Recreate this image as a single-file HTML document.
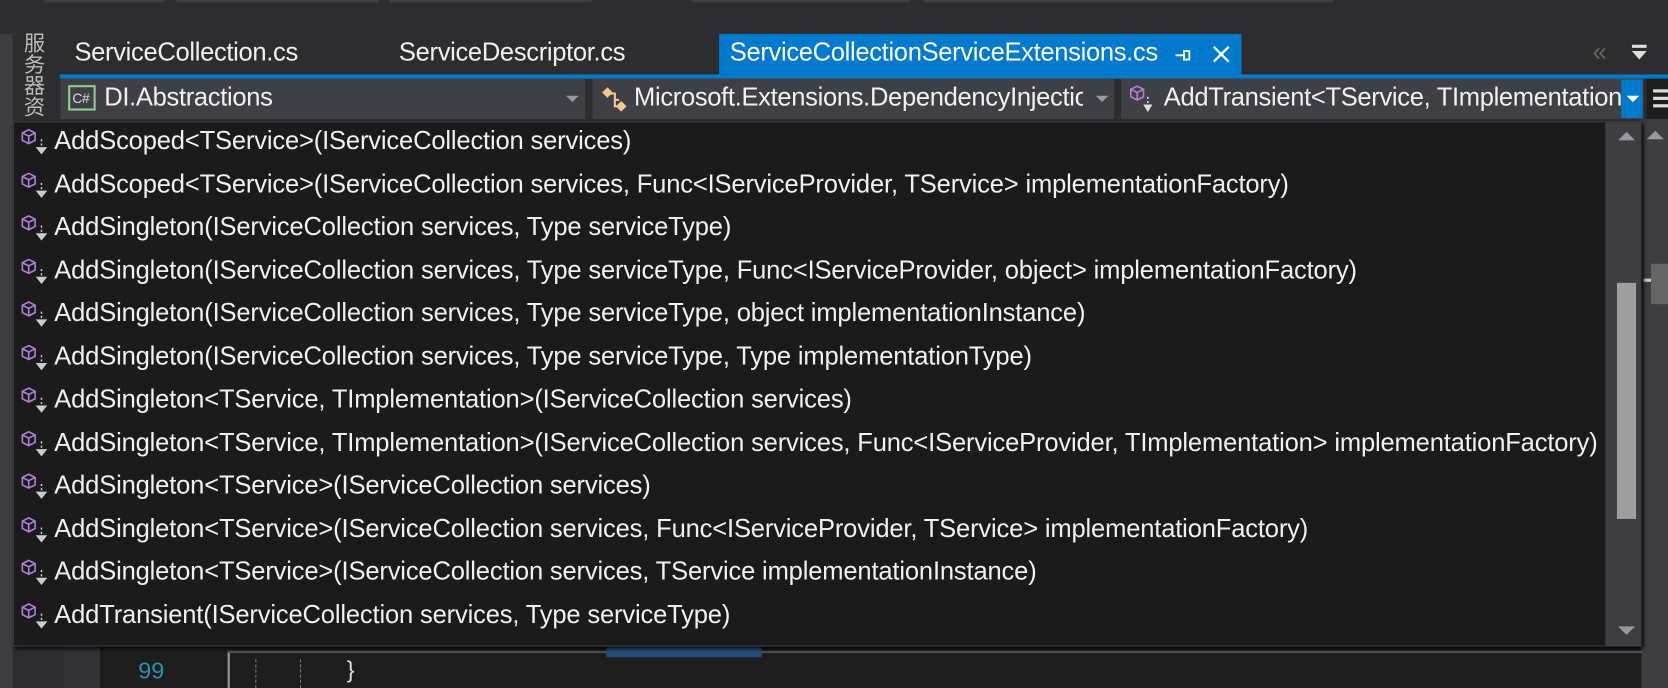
<!DOCTYPE html>
<html><head><meta charset="utf-8"><style>
*{margin:0;padding:0;box-sizing:border-box}
body{width:1668px;height:688px;background:#2d2d30;overflow:hidden;font-family:"Liberation Sans","Noto Sans CJK SC",sans-serif;color:#f1f1f1}
#w{position:absolute;left:0;top:0;width:1568px;height:647px;transform:scale(1.06378,1.0634);transform-origin:0 0;overflow:hidden;background:#2d2d30}
.a{position:absolute}
.tab{position:absolute;top:32px;height:38px;font-size:24px;line-height:36px;padding-left:10px;white-space:nowrap;letter-spacing:-0.3px}
.combo{position:absolute;top:74px;height:38px;background:#3f3f46;border:1px solid #434346;font-size:24px;line-height:34px;white-space:nowrap;overflow:hidden;letter-spacing:-0.3px}
.tri{position:absolute;width:0;height:0;border-left:6px solid transparent;border-right:6px solid transparent;border-top:6px solid #999}
.row{position:absolute;left:6px;height:40px;font-size:24px;line-height:40px;white-space:nowrap;color:#f1f1f1;letter-spacing:-0.15px}
.row svg{position:absolute;left:0;top:8px}
.row span{position:absolute;left:32px}
</style></head><body><div id="w">
<div class="a" style="left:42px;top:0;width:112px;height:2px;background:#3f3f46"></div>
<div class="a" style="left:166px;top:0;width:190px;height:2px;background:#3f3f46"></div>
<div class="a" style="left:366px;top:0;width:190px;height:2px;background:#3f3f46"></div>
<div class="a" style="left:650px;top:0;width:205px;height:2px;background:#3f3f46"></div>
<div class="a" style="left:868px;top:0;width:385px;height:2px;background:#3f3f46"></div>
<div class="a" style="left:0;top:32px;width:12px;height:615px;background:#3e3e42"></div>
<div class="a" style="left:19px;top:30px;font-size:20px;line-height:22px;width:22px;color:#bbb;writing-mode:vertical-rl">服务器资</div>
<div class="tab" style="left:60px">ServiceCollection.cs</div>
<div class="tab" style="left:365px">ServiceDescriptor.cs</div>
<div class="tab" style="left:676px;width:491px;background:#007acc;color:#fff">ServiceCollectionServiceExtensions.cs
<svg style="position:absolute;left:428px;top:13px" width="16" height="14"><path d="M1 7H9M9 2V12M9 3H14V11H9" stroke="#fff" stroke-width="1.8" fill="none"/></svg>
<svg style="position:absolute;left:464px;top:11px" width="16" height="16"><path d="M1 1L15 15M15 1L1 15" stroke="#fff" stroke-width="2.2"/></svg></div>
<div class="a" style="left:1497px;top:36px;font-size:24px;color:#666">«</div>
<svg class="a" style="left:1534px;top:42px" width="14" height="16"><rect x="0" y="0" width="14" height="3" fill="#ddd"/><path d="M0 6H14L7 14Z" fill="#ddd"/></svg>
<div class="a" style="left:56px;top:70px;width:1512px;height:4px;background:#007acc"></div>
<div class="combo" style="left:57px;width:493px"><svg style="position:absolute;left:6px;top:5px" width="26" height="24"><rect x="1" y="1" width="24" height="22" fill="none" stroke="#8fd18f" stroke-width="2"/><text x="4" y="17" font-size="13" fill="#ddd" font-family="Liberation Sans">C#</text></svg><span style="position:absolute;left:40px">DI.Abstractions</span><div class="tri" style="left:474px;top:15px"></div></div>
<div class="combo" style="left:557px;width:490px"><svg style="position:absolute;left:6px;top:6px" width="28" height="26"><path d="M2 6L7 1L12 6L7 11Z" fill="#f0c890"/><path d="M9 7H14V19H18M14 13H18" stroke="#f0c890" stroke-width="2" fill="none"/><path d="M15 19L20 14L25 19L20 24Z" fill="#f0c890"/></svg><span style="position:absolute;left:38px;width:422px;overflow:hidden">Microsoft.Extensions.DependencyInjection</span><div class="tri" style="left:472px;top:15px"></div></div>
<div class="combo" style="left:1054px;width:491px"><svg style="position:absolute;left:4px;top:4px" width="30" height="30"><path d="M4 5L10 2L16 5V12L10 15L4 12Z M4 5L10 8L16 5M10 8V15" fill="none" stroke="#b180d7" stroke-width="1.5"/><path d="M20 12V14M20 16V18M17 20H23L20 25Z" stroke="#ddd" fill="#ddd" stroke-width="1.5"/></svg><span style="position:absolute;left:39px;width:430px;overflow:hidden">AddTransient&lt;TService, TImplementation&gt;</span><div style="position:absolute;left:469px;top:-1px;width:22px;height:38px;background:#007acc"><div class="tri" style="left:5px;top:16px;border-top-color:#fff"></div></div></div>
<div class="a" style="left:1548px;top:74px;width:20px;height:38px;background:#1e1e1e"><div style="position:absolute;left:6px;top:10px;width:14px;height:3px;background:#ddd"></div><div style="position:absolute;left:6px;top:17px;width:14px;height:3px;background:#ddd"></div><div style="position:absolute;left:6px;top:24px;width:14px;height:3px;background:#ddd"></div></div>
<div class="a" style="left:1543px;top:112px;width:25px;height:535px;background:#3e3e42"></div>
<div class="a" style="left:1545px;top:262px;width:23px;height:3px;background:#ccc"></div>
<div class="a" style="left:1552px;top:248px;width:16px;height:38px;background:#666"></div>
<div class="a" style="left:1548px;top:123px;width:0;height:0;border-left:8px solid transparent;border-right:8px solid transparent;border-bottom:8px solid #999"></div>
<div class="a" style="left:12px;top:608px;width:48px;height:39px;background:#2d2d30"></div>
<div class="a" style="left:60px;top:608px;width:1483px;height:39px;background:#1e1e1e"></div>
<div class="a" style="left:60px;top:608px;width:34px;height:39px;background:#333337"></div>
<div class="a" style="left:130px;top:618px;font-size:22px;color:#2b91af">99</div>
<div class="a" style="left:214px;top:612px;width:2px;height:35px;background:#999"></div>
<div class="a" style="left:214px;top:612px;width:1330px;height:2px;background:#555"></div>
<div class="a" style="left:570px;top:608px;width:146px;height:10px;background:#264f78"></div>
<div class="a" style="left:240px;top:620px;width:1px;height:27px;border-left:1px dashed #777"></div>
<div class="a" style="left:282px;top:620px;width:1px;height:27px;border-left:1px dashed #777"></div>
<div class="a" style="left:326px;top:617px;font-size:22px;color:#ddd">}</div>
<div class="a" style="left:12px;top:114px;width:1531px;height:494px;background:#1b1b1c;border:1px solid #3f3f46;box-shadow:2px 2px 4px #000;overflow:hidden">
<div class="a" style="left:1496px;top:0;width:34px;height:492px;background:#3e3e42"></div>
<div class="a" style="left:1507px;top:151px;width:18px;height:222px;background:#9e9e9e"></div>
<div class="a" style="left:1508px;top:9px;width:0;height:0;border-left:8px solid transparent;border-right:8px solid transparent;border-bottom:8px solid #999"></div>
<div class="a" style="left:1508px;top:474px;width:0;height:0;border-left:8px solid transparent;border-right:8px solid transparent;border-top:8px solid #999"></div>
<div class="a" style="left:0;top:-2px;width:1495px;height:494px;overflow:hidden">
<div id="rows"></div>
</div></div>
</div>
<script>
var t=["AddScoped&lt;TService&gt;(IServiceCollection services)","AddScoped&lt;TService&gt;(IServiceCollection services, Func&lt;IServiceProvider, TService&gt; implementationFactory)","AddSingleton(IServiceCollection services, Type serviceType)","AddSingleton(IServiceCollection services, Type serviceType, Func&lt;IServiceProvider, object&gt; implementationFactory)","AddSingleton(IServiceCollection services, Type serviceType, object implementationInstance)","AddSingleton(IServiceCollection services, Type serviceType, Type implementationType)","AddSingleton&lt;TService, TImplementation&gt;(IServiceCollection services)","AddSingleton&lt;TService, TImplementation&gt;(IServiceCollection services, Func&lt;IServiceProvider, TImplementation&gt; implementationFactory)","AddSingleton&lt;TService&gt;(IServiceCollection services)","AddSingleton&lt;TService&gt;(IServiceCollection services, Func&lt;IServiceProvider, TService&gt; implementationFactory)","AddSingleton&lt;TService&gt;(IServiceCollection services, TService implementationInstance)","AddTransient(IServiceCollection services, Type serviceType)","AddTransient&lt;TService, TImplementation&gt;(IServiceCollection services)"];
var ic='<svg width="30" height="26"><path d="M2 4L8 1L14 4V11L8 14L2 11Z M2 4L8 7L14 4M8 7V14" fill="none" stroke="#b180d7" stroke-width="1.5"/><path d="M20 10V12M20 14V16M16 18H24L20 23Z" stroke="#ccc" fill="#ccc" stroke-width="1.4"/></svg>';
var h="";for(var i=0;i<t.length;i++){h+='<div class="row" style="top:'+(i*40.5)+'px">'+ic+'<span>'+t[i]+'</span></div>';}
document.getElementById("rows").innerHTML=h;
</script>
</body></html>
